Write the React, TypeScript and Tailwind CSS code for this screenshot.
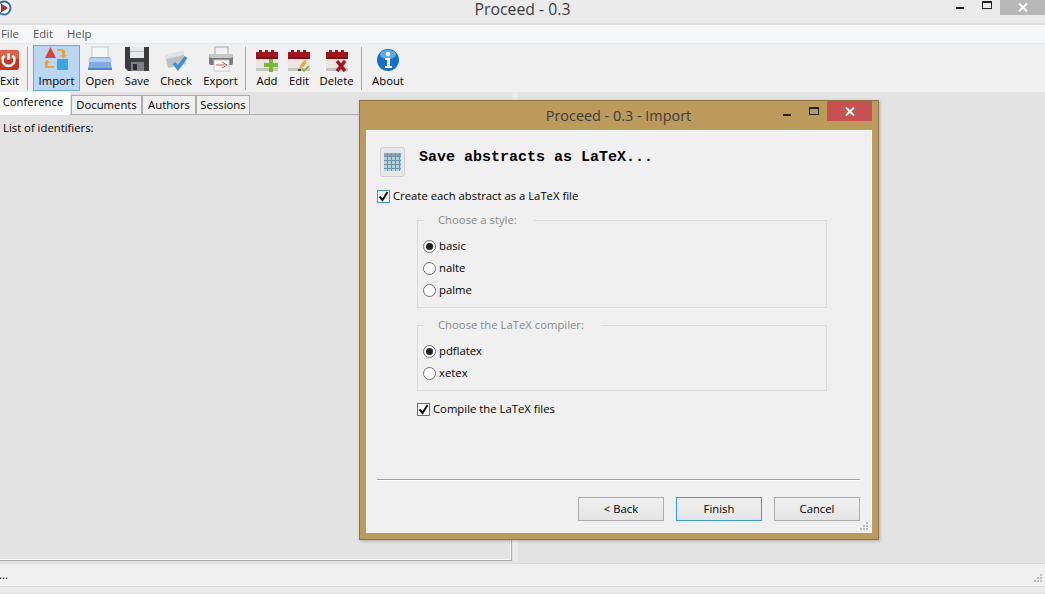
import type { ReactNode } from 'react';

const ExitIcon = () => (
  <svg width="24" height="24" viewBox="0 0 24 24">
    <rect x="2" y="2" width="21" height="20" rx="3" fill="#c8321f" />
    <rect x="2" y="2" width="21" height="9" rx="3" fill="#e0604a" />
    <path d="M8.500 7.500a6 6 0 1 0 8 0" fill="none" stroke="#fff" strokeWidth="2.400" />
    <path d="M12.500 5v7" stroke="#fff" strokeWidth="2.400" />
  </svg>
);

const ImportIcon = () => (
  <svg width="26" height="26" viewBox="0 0 26 26">
    <path d="M6.500 1L12 12H1z" fill="#e0413c" />
    <rect x="13" y="13" width="11" height="11" fill="#3ba7dc" />
    <path d="M13 3h6l2 2v4h2l-3.500 3.500L16 9h2V6l-1-1h-4z" fill="#eda32c" />
    <path d="M1 22h9v-2H4v-3h2L3 14l-3 3h1z" fill="#eda32c" />
  </svg>
);

const OpenIcon = () => (
  <svg width="26" height="26" viewBox="0 0 26 26">
    <rect x="5" y="1" width="16" height="14" fill="#f6f7f9" stroke="#c4cbd2" />
    <path d="M3 11h20l2 13H1z" fill="#7fabe3" />
    <rect x="1.500" y="12" width="23" height="4" fill="#b4cff0" />
    <rect x="1" y="22" width="24" height="2" fill="#5483c6" />
  </svg>
);

const SaveIcon = () => (
  <svg width="26" height="26" viewBox="0 0 26 26">
    <path d="M1 1h24v24H4l-3-3z" fill="#3c3c3e" />
    <rect x="6" y="1" width="14" height="11" fill="#e6e8ea" />
    <rect x="6" y="5" width="14" height="1" fill="#b6babe" />
    <rect x="7" y="16" width="13" height="9" fill="#7d7f82" />
    <rect x="9" y="18" width="4" height="6" fill="#2e2e30" />
  </svg>
);

const CheckIcon = () => (
  <svg width="26" height="26" viewBox="0 0 26 26">
    <path d="M2 9l18-4 3 13-18 4z" fill="#bfc1c3" />
    <path d="M2 9l18-4 1 4-18 4z" fill="#e2e3e4" />
    <path d="M11 17l4 5 8-11" fill="none" stroke="#3a93d6" strokeWidth="3.500" />
  </svg>
);

const ExportIcon = () => (
  <svg width="26" height="26" viewBox="0 0 26 26">
    <rect x="7" y="1" width="13" height="8" fill="#f3f3f3" stroke="#a8a8a8" />
    <rect x="1" y="8" width="24" height="11" rx="2" fill="#77797c" />
    <rect x="1" y="8" width="24" height="4" rx="2" fill="#c6c8ca" />
    <rect x="6" y="14" width="15" height="11" fill="#fafafa" stroke="#c8c8c8" />
    <path d="M14 16l5 3-5 3M8 19h9" fill="none" stroke="#d9534f" strokeWidth="1" />
  </svg>
);

const Calendar = ({ children }: { children: ReactNode }) => (
  <svg width="24" height="24" viewBox="0 0 24 24">
    <rect x="1" y="4" width="22" height="19" fill="#e8e6e2" />
    <rect x="1" y="20" width="22" height="3" fill="#c6c4c0" />
    <path d="M1 11V4h3V2h3v2h3V2h3v2h3V2h3v2h4v7z" fill="#a8141c" />
    <rect x="1" y="9" width="22" height="2" fill="#7f0f15" />
    {children}
  </svg>
);

const AddIcon = () => (
  <Calendar>
    <path d="M14 11h4v4h5v4h-5v5h-4v-5h-5v-4h5z" fill="#7ab929" />
  </Calendar>
);

const EditIcon = () => (
  <Calendar>
    <path d="M12 21l2-5 4-4 2 2-4 5z" fill="#e8a53a" />
    <path d="M15 21l2 2 5-5" fill="none" stroke="#7ab929" strokeWidth="1.500" />
    <rect x="11" y="21" width="3" height="2" fill="#4a4a4a" />
  </Calendar>
);

const DeleteIcon = () => (
  <Calendar>
    <path d="M12 13l8 10M20 13l-8 10" stroke="#a8141c" strokeWidth="3.600" />
  </Calendar>
);

const AboutIcon = () => (
  <svg width="24" height="24" viewBox="0 0 24 24">
    <circle cx="12" cy="12" r="11" fill="#1470c8" />
    <ellipse cx="12" cy="6.500" rx="8" ry="4.500" fill="#62a8e6" />
    <circle cx="12" cy="6" r="2.200" fill="#fff" />
    <path d="M9 10h5v8h2v2H9v-2h2v-6H9z" fill="#fff" />
  </svg>
);

const Sep = () => <div className="w-px h-[43px] mt-[3px] bg-[#a9a9a9] shrink-0" />;

function ToolButton({ label, icon, className }: { label: string; icon: ReactNode; className: string }) {
  return (
    <div className={`flex flex-col items-center shrink-0 ${className}`}>
      <div className="h-[28px] flex items-end justify-center">{icon}</div>
      <span className="mt-[1px] leading-[16px]">{label}</span>
    </div>
  );
}

function Radio({ label, checked }: { label: string; checked?: boolean }) {
  return (
    <div className="h-[22px] flex items-center gap-[3px]">
      <span className="w-[13px] h-[13px] rounded-full border border-[#6f6f6f] bg-white flex items-center justify-center">
        {checked && <span className="w-[7px] h-[7px] rounded-full bg-[#222]" />}
      </span>
      <span>{label}</span>
    </div>
  );
}

function Check({ label, focused }: { label: string; focused?: boolean }) {
  return (
    <div className="flex items-center gap-[3px] h-[16px]">
      <span className={`w-[13px] h-[13px] border bg-white flex items-center justify-center ${focused ? 'border-[#3399ff]' : 'border-[#707070]'}`}>
        <svg width="11" height="11" viewBox="0 0 11 11">
          <path d="M1.500 5.500l3 3.500 5-8" fill="none" stroke="#111" strokeWidth="2" />
        </svg>
      </span>
      <span>{label}</span>
    </div>
  );
}

function Grip() {
  return (
    <svg width="8" height="8" viewBox="0 0 8 8" className="block">
      <path d="M6 0h2v2H6zM3 3h2v2H3zM6 3h2v2H6zM0 6h2v2H0zM3 6h2v2H3zM6 6h2v2H6z" fill="#bdbdbd" />
    </svg>
  );
}

function DialogButton({ label, primary }: { label: string; primary?: boolean }) {
  return (
    <div className={`w-[86px] h-[24px] border flex items-center justify-center bg-gradient-to-b from-[#f0f0f0] to-[#e5e5e5] ${primary ? 'border-[#3399ff]' : 'border-[#acacac]'}`}>
      {label}
    </div>
  );
}

const WinClose = () => (
  <svg width="10" height="9" viewBox="0 0 10 9">
    <path d="M1 0.500l8 8M9 0.500l-8 8" stroke="#fff" strokeWidth="2" />
  </svg>
);

const tabClass = 'h-[20px] mt-[3px] border border-[#acacac] bg-[#f0f0f0] flex items-center justify-center shrink-0';

export default function App() {
  return (
    <div className="relative w-[1045px] h-[594px] overflow-hidden flex flex-col bg-[#e3e3e3] text-black text-[11.3px] font-['Open_Sans','Noto_Sans',sans-serif]">
      {/* main title bar */}
      <div className="relative h-[25px] shrink-0 bg-[#ebebeb] border-b-2 border-[#dedede] flex items-center justify-center">
        <span className="text-[15.8px] leading-none text-[#3c3c3c] mt-[-3px]">Proceed - 0.3</span>
        <svg width="17" height="17" viewBox="0 0 17 17" className="absolute left-[-4px] top-0">
          <circle cx="8" cy="8" r="6.500" fill="#fff" stroke="#2a6fa8" strokeWidth="2" />
          <path d="M5 3.500l7 4.500-7 4.500z" fill="#c0272d" />
        </svg>
        <div className="absolute left-[956px] top-[7px] w-[8px] h-[2px] bg-[#222]" />
        <div className="absolute left-[982px] top-[1px] w-[10px] h-[8px] border border-[#222] border-t-2" />
        <div className="absolute left-[1000px] top-0 w-[45px] h-[15px] bg-[#b8b8b8] flex items-center justify-center">
          <WinClose />
        </div>
      </div>

      {/* menu */}
      <div className="h-[19px] shrink-0 bg-[#f5f6f7] border-b border-[#e8e8e8] flex items-center pl-[1px] text-[#555]">
        <span className="mr-[14px]">File</span>
        <span className="mr-[14px]">Edit</span>
        <span>Help</span>
      </div>

      {/* toolbar */}
      <div className="h-[48px] shrink-0 bg-[#f0f0f0] flex">
        <ToolButton label="Exit" icon={<ExitIcon />} className="w-[19px] mr-[8px] [&>div]:-ml-[4px]" />
        <Sep />
        <div className="ml-[5px] mt-[1px] w-[47px] h-[46px] shrink-0 border border-[#66a7e8] bg-[#b9d7f2] flex flex-col items-center">
          <div className="h-[27px] flex items-end justify-center -translate-y-[1px]"><ImportIcon /></div>
          <span className="leading-[16px]">Import</span>
        </div>
        <ToolButton label="Open" icon={<OpenIcon />} className="w-[36px] ml-[2px]" />
        <ToolButton label="Save" icon={<SaveIcon />} className="w-[38px]" />
        <ToolButton label="Check" icon={<CheckIcon />} className="w-[40px]" />
        <ToolButton label="Export" icon={<ExportIcon />} className="w-[49px]" />
        <Sep />
        <ToolButton label="Add" icon={<AddIcon />} className="w-[38px] ml-[2px]" />
        <ToolButton label="Edit" icon={<EditIcon />} className="w-[26px]" />
        <ToolButton label="Delete" icon={<DeleteIcon />} className="w-[49px]" />
        <Sep />
        <ToolButton label="About" icon={<AboutIcon />} className="w-[52px]" />
      </div>

      {/* tabs and pane */}
      <div className="flex-1 min-h-0 flex">
        <div className="w-[512px] shrink-0 flex flex-col">
          <div className="h-[23px] shrink-0 flex border-b border-[#acacac]">
            <div className="w-[70px] h-[23px] pb-[2px] pr-[4px] bg-white flex items-center justify-center shrink-0 mr-[1px] relative z-10">Conference</div>
            <div className={`${tabClass} w-[71px]`}>Documents</div>
            <div className={`${tabClass} w-[54px]`}>Authors</div>
            <div className={`${tabClass} w-[54px]`}>Sessions</div>
          </div>
          <div className="flex-1 min-h-0 border-r border-b border-[#acacac]">
            <div className="h-full pl-[3px] pt-[5px] border-r border-b border-white">List of identifiers:</div>
          </div>
        </div>
        <div className="w-[5px] ml-[1px] shrink-0 bg-[#ebebeb]" />
      </div>

      {/* status bar */}
      <div className="h-[24px] mt-[2px] shrink-0 bg-[#f0f0f0] border-y border-[#dadada] flex items-center justify-between pr-[3px]">
        <span className="leading-none -ml-[1px]">...</span>
        <div className="mt-[6px]"><Grip /></div>
      </div>
      <div className="h-[7px] shrink-0 bg-[#ebebeb] border-b border-[#dadada]" />

      {/* import dialog */}
      <div className="absolute left-[359px] top-[100px] w-[520px] h-[440px] border border-[#8f7545] bg-[#bb9a5c] shadow-[1px_1px_3px_rgba(0,0,0,0.25)] flex flex-col">
        <div className="relative h-[29px] shrink-0 flex items-center justify-center">
          <span className="text-[14.4px] text-[#3c3c3c] -ml-[1px]">Proceed - 0.3 - Import</span>
          <div className="absolute left-[423px] top-[13px] w-[8px] h-[2px] bg-[#222]" />
          <div className="absolute left-[449px] top-[6px] w-[10px] h-[8px] border border-[#222] border-t-2" />
          <div className="absolute left-[467px] top-0 w-[45px] h-[20px] bg-[#c75050] flex items-center justify-center">
            <WinClose />
          </div>
        </div>
        <div className="relative mx-[6px] mb-[6px] flex-1 min-h-0 bg-[#f0f0f0] border border-[#fafafa] flex flex-col pl-[10px] pr-[11px] pt-[16px]">
          <div className="flex items-center h-[30px] ml-[3px]">
            <div className="w-[25px] h-[30px] rounded-[3px] border border-[#cfcfcf] bg-[#e8e8e8] flex items-center justify-center shrink-0">
              <svg width="17" height="18" viewBox="0 0 17 18">
                <rect width="17" height="18" fill="#b4d0de" />
                <rect width="17" height="3" fill="#8aa8b8" />
                <path d="M0 3.500h17M0 7.500h17M0 11.500h17M0 15.500h17M3.500 0v18M7.500 0v18M11.500 0v18M15.500 0v18" stroke="#6f94a8" strokeWidth="1" />
              </svg>
            </div>
            <span className="ml-[14px] mb-[8px] text-[15px] font-bold font-['Liberation_Mono',monospace]">Save abstracts as LaTeX...</span>
          </div>
          <div className="mt-[11px]"><Check label="Create each abstract as a LaTeX file" focused /></div>

          <fieldset className="ml-[40px] mr-[33px] mt-[8px] h-[96px] border border-[#dcdcdc] pl-[5px] pt-[7px]">
            <legend className="ml-[1px] pl-[14px] pr-[17px] text-[#8a8a8a] leading-[16px]">Choose a style:</legend>
            <Radio label="basic" checked />
            <Radio label="nalte" />
            <Radio label="palme" />
          </fieldset>

          <fieldset className="ml-[40px] mr-[33px] mt-[9px] h-[74px] border border-[#dcdcdc] pl-[5px] pt-[7px]">
            <legend className="ml-[1px] pl-[14px] pr-[17px] text-[#8a8a8a] leading-[16px]">Choose the LaTeX compiler:</legend>
            <Radio label="pdflatex" checked />
            <Radio label="xetex" />
          </fieldset>

          <div className="ml-[40px] mt-[10px]"><Check label="Compile the LaTeX files" /></div>

          <div className="mt-[62px] h-[2px] border-t border-[#a0a0a0] bg-white shrink-0" />
          <div className="mt-[16px] flex justify-end gap-[12px]">
            <DialogButton label="< Back" />
            <DialogButton label="Finish" primary />
            <DialogButton label="Cancel" />
          </div>
          <div className="absolute right-[3px] bottom-[2px]"><Grip /></div>
        </div>
      </div>
    </div>
  );
}
